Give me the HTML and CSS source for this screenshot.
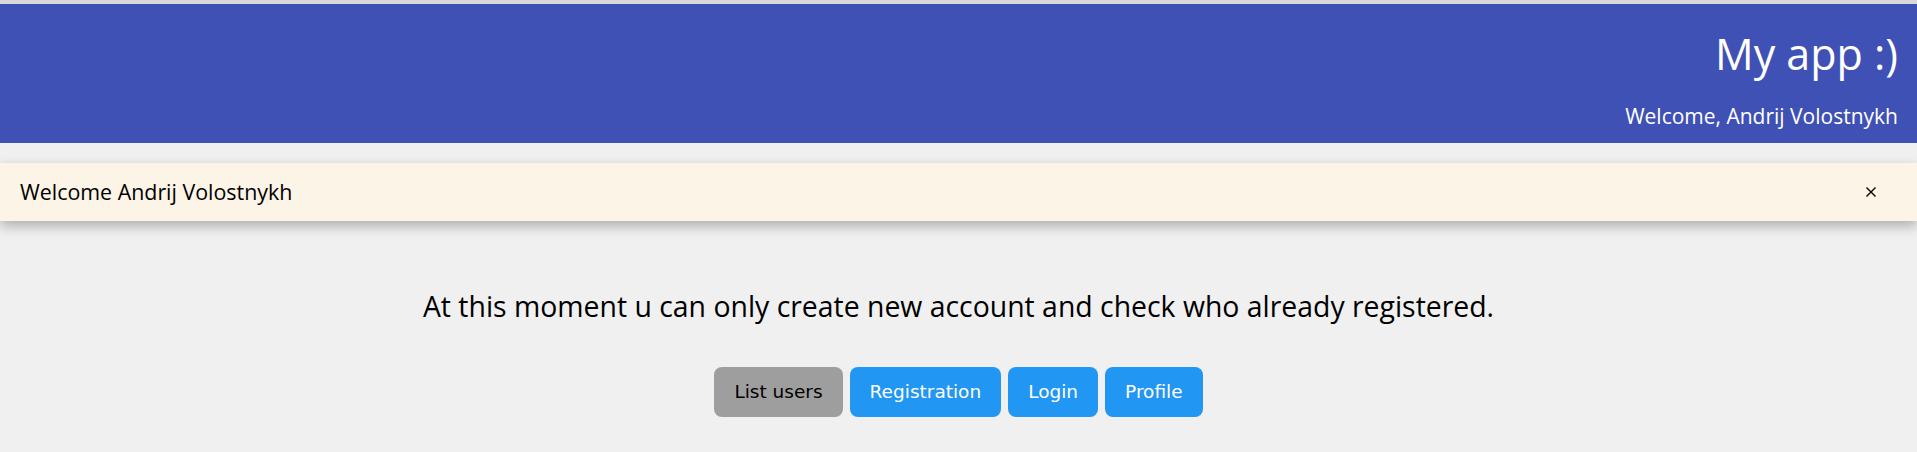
FILE: index.html
```html
<!DOCTYPE html>
<html lang="en">
<head>
<meta charset="utf-8">
<title>My app :)</title>
<link rel="stylesheet" href="styles.css">
</head>
<body>
<div class="strip"></div>
<header class="appbar">
  <h1 class="appbar-title">My app :)</h1>
  <div class="appbar-user">Welcome, Andrij Volostnykh</div>
</header>
<div class="alert">
  <span class="alert-text">Welcome Andrij Volostnykh</span>
  <button class="alert-close" aria-label="Close">
    <svg width="10" height="10" viewBox="0 0 10 10"><path d="M0.5 0.5 L9.5 9.5 M9.5 0.5 L0.5 9.5" stroke="#000" stroke-width="1.4" fill="none"/></svg>
  </button>
</div>
<main class="content">
  <p class="intro">At this moment u can only create new account and check who already registered.</p>
  <nav class="actions">
    <button class="btn btn-gray">List users</button>
    <button class="btn btn-blue">Registration</button>
    <button class="btn btn-blue">Login</button>
    <button class="btn btn-blue">Profile</button>
  </nav>
</main>
</body>
</html>
```

FILE: styles.css
```css
html, body {
  margin: 0;
  padding: 0;
}
body {
  background: #f0f0f0;
  font-family: "Open Sans", "Noto Sans", sans-serif;
  color: #000;
}
.strip {
  height: 4px;
  background: #d9d9d9;
}
.appbar {
  height: 139px;
  box-sizing: border-box;
  background: #3f51b5;
  color: #fff;
  display: flex;
  flex-direction: column;
  align-items: flex-end;
  padding: 23px 19px 0 0;
}
.appbar-title {
  margin: 0;
  font-weight: 400;
  font-size: 43px;
  line-height: 54px;
}
.appbar-user {
  margin-top: 21px;
  font-size: 21px;
  line-height: 28px;
}
.alert {
  margin-top: 20px;
  height: 58px;
  background: #fcf4e6;
  box-shadow: 0 5px 12px rgba(0, 0, 0, 0.28);
  display: flex;
  align-items: center;
  justify-content: space-between;
  padding: 0 41px 0 20px;
}
.alert-text {
  font-size: 21.4px;
  line-height: 28px;
}
.alert-close {
  border: 0;
  background: transparent;
  padding: 0;
  width: 10px;
  height: 10px;
  display: flex;
}
.content {
  padding-top: 66px;
}
.intro {
  margin: 0;
  text-align: center;
  font-size: 28.4px;
  line-height: 38px;
}
.actions {
  display: flex;
  justify-content: center;
  gap: 7px;
  margin-top: 42px;
}
.btn {
  font-family: "DejaVu Sans", Verdana, sans-serif;
  font-size: 18.5px;
  line-height: 22px;
  padding: 14px 20px;
  border: 0;
  border-radius: 8px;
  color: #fff;
}
.btn-gray {
  background: #9e9e9e;
  color: #000;
}
.btn-blue {
  background: #2196f3;
}
```
